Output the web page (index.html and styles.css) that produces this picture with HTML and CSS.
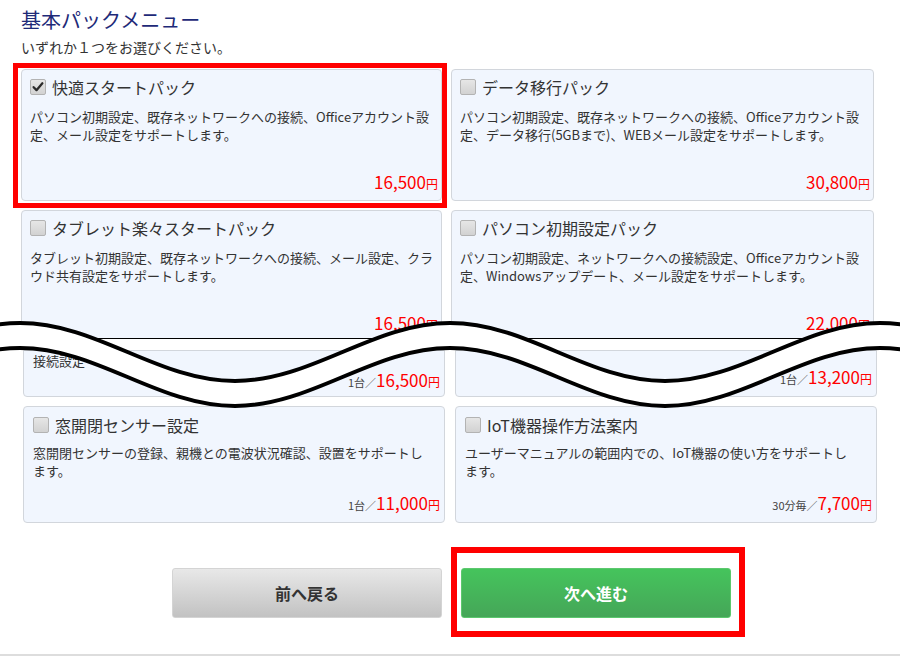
FILE: index.html
```html
<!DOCTYPE html>
<html lang="ja">
<head>
    <meta charset="UTF-8">
    <meta name="viewport" content="width=device-width, initial-scale=1.0">
    <title>基本パックメニュー</title>
    <link rel="stylesheet" href="styles.css">
</head>
<body>
    <div class="page">
        <!-- 上半分 -->
        <div class="shot shot-upper">
            <h2 class="menu-title">基本パックメニュー</h2>
            <p class="menu-lead">いずれか１つをお選びください。</p>

            <div class="pack-grid">
                <div class="pack is-checked is-marked">
                    <div class="pack-head">
                        <span class="check">
                            <svg viewBox="0 0 16 16" width="14" height="14"><path d="M3 8.2 L6.3 11.6 L13 3.8" fill="none" stroke="#2b2b2b" stroke-width="2.6" stroke-linecap="round" stroke-linejoin="round"/></svg>
                        </span>
                        快適スタートパック
                    </div>
                    <div class="pack-desc">パソコン初期設定、既存ネットワークへの接続、Officeアカウント設<br>定、メール設定をサポートします。</div>
                    <div class="pack-price"><em>16,500</em>円</div>
                </div>

                <div class="pack">
                    <div class="pack-head"><span class="check"></span>データ移行パック</div>
                    <div class="pack-desc">パソコン初期設定、既存ネットワークへの接続、Officeアカウント設<br>定、データ移行(5GBまで)、WEBメール設定をサポートします。</div>
                    <div class="pack-price"><em>30,800</em>円</div>
                </div>

                <div class="pack">
                    <div class="pack-head"><span class="check"></span>タブレット楽々スタートパック</div>
                    <div class="pack-desc">タブレット初期設定、既存ネットワークへの接続、メール設定、クラ<br>ウド共有設定をサポートします。</div>
                    <div class="pack-price"><em>16,500</em>円</div>
                </div>

                <div class="pack">
                    <div class="pack-head"><span class="check"></span>パソコン初期設定パック</div>
                    <div class="pack-desc">パソコン初期設定、ネットワークへの接続設定、Officeアカウント設<br>定、Windowsアップデート、メール設定をサポートします。</div>
                    <div class="pack-price"><em>22,000</em>円</div>
                </div>
            </div>
        </div>

        <!-- 下半分 -->
        <div class="shot shot-lower">
            <div class="pack-grid is-lower">
                <div class="pack is-tail">
                    <div class="pack-desc">接続設定</div>
                    <div class="pack-price"><small>1台／</small><em>16,500</em>円</div>
                </div>
                <div class="pack is-tail">
                    <div class="pack-desc"></div>
                    <div class="pack-price"><small>1台／</small><em>13,200</em>円</div>
                </div>

                <div class="pack is-short">
                    <div class="pack-head"><span class="check"></span>窓開閉センサー設定</div>
                    <div class="pack-desc">窓開閉センサーの登録、親機との電波状況確認、設置をサポートし<br>ます。</div>
                    <div class="pack-price"><small>1台／</small><em>11,000</em>円</div>
                </div>
                <div class="pack is-short">
                    <div class="pack-head"><span class="check"></span>IoT機器操作方法案内</div>
                    <div class="pack-desc">ユーザーマニュアルの範囲内での、IoT機器の使い方をサポートし<br>ます。</div>
                    <div class="pack-price"><small>30分毎／</small><em>7,700</em>円</div>
                </div>
            </div>

            <div class="step-nav">
                <a class="btn btn-back" href="#">前へ戻る</a>
                <a class="btn btn-next is-marked" href="#">次へ進む</a>
            </div>
        </div>

        <div class="page-foot"></div>

        <!-- 省略の波線 -->
        <svg class="cut-wave" viewBox="0 0 900 120" width="900" height="120">
            <path fill="#fff" d="M -195 81 C -117.6 81 -57.4 23 20 23 C 97.4 23 157.6 81 235 81 C 312.4 81 372.6 23 450 23 C 527.4 23 587.6 81 665 81 C 742.4 81 802.6 23 880 23 C 957.4 23 1017.6 81 1095 81 L 1095 106 C 1017.6 106 957.4 48 880 48 C 802.6 48 742.4 106 665 106 C 587.6 106 527.4 48 450 48 C 372.6 48 312.4 106 235 106 C 157.6 106 97.4 48 20 48 C -57.4 48 -117.6 106 -195 106 Z"/>
            <path fill="none" stroke="#000" stroke-width="4" d="M -195 81 C -117.6 81 -57.4 23 20 23 C 97.4 23 157.6 81 235 81 C 312.4 81 372.6 23 450 23 C 527.4 23 587.6 81 665 81 C 742.4 81 802.6 23 880 23 C 957.4 23 1017.6 81 1095 81"/>
            <path fill="none" stroke="#000" stroke-width="4" d="M -195 106 C -117.6 106 -57.4 48 20 48 C 97.4 48 157.6 106 235 106 C 312.4 106 372.6 48 450 48 C 527.4 48 587.6 106 665 106 C 742.4 106 802.6 48 880 48 C 957.4 48 1017.6 106 1095 106"/>
        </svg>
    </div>
</body>
</html>
```

FILE: styles.css
```css
body {
    margin: 0;
    background-color: #fff;
    font-family: "Noto Sans CJK JP", "Noto Sans", sans-serif;
    color: #333;
}

.page {
    position: relative;
    width: 900px;
    height: 657px;
    overflow: hidden;
}

/* 上のスクリーンショット部分 */
.shot-upper {
    box-sizing: border-box;
    height: 339px;
    padding-left: 21px;
    border-bottom: 1px solid #000;
    overflow: hidden;
}

.menu-title {
    margin: 0;
    padding-top: 8px;
    font-size: 20px;
    line-height: 24px;
    font-weight: normal;
    color: #1e2a78;
}

.menu-lead {
    margin: 6px 0 0;
    font-size: 14px;
    line-height: 18px;
}

.pack-grid {
    display: grid;
    grid-template-columns: 421px 423px;
    column-gap: 9px;
    row-gap: 9px;
    margin-top: 13px;
}

.pack {
    position: relative;
    box-sizing: border-box;
    height: 132px;
    display: flex;
    flex-direction: column;
    padding: 9px 3px 6px 8px;
    background-color: #f1f6fe;
    border: 1px solid #d2d6dc;
    border-radius: 4px;
}

.pack-head {
    display: flex;
    align-items: center;
    gap: 6px;
    height: 16px;
    font-size: 16px;
    line-height: 18px;
}

.check {
    box-sizing: border-box;
    width: 16px;
    height: 16px;
    display: flex;
    align-items: center;
    justify-content: center;
    background: linear-gradient(#e6e6e6, #d2d2d2);
    border: 1px solid #b3b3b3;
    border-radius: 2px;
}

.pack-desc {
    margin-top: 13px;
    font-size: 13px;
    line-height: 18px;
    white-space: nowrap;
}

.pack-price {
    margin-top: auto;
    text-align: right;
    font-size: 12px;
    line-height: 20px;
    color: #f00;
}

.pack-price em {
    font-style: normal;
    font-size: 17px;
}

.pack-price small {
    font-size: 11px;
    color: #444;
}

/* 赤枠の注記 */
.is-marked::after {
    content: "";
    position: absolute;
    left: -9px;
    top: -7px;
    right: -6px;
    bottom: -8px;
    border: 5px solid #f00;
    pointer-events: none;
}

/* 下のスクリーンショット部分 */
.shot-lower {
    padding-top: 11px;
}

.pack-grid.is-lower {
    grid-template-columns: 422px 422px;
    column-gap: 10px;
    margin-top: 0;
    padding-left: 23px;
}

.pack.is-tail {
    height: 47px;
    padding: 0 4px 7px 9px;
    border-top-left-radius: 0;
    border-top-right-radius: 0;
}

.pack.is-tail .pack-desc {
    margin-top: 1px;
}

.pack.is-short {
    height: 117px;
    padding: 10px 4px 7px 9px;
}

.pack.is-short .pack-desc {
    margin-top: 11px;
}

.step-nav {
    display: flex;
    gap: 19px;
    padding-left: 172px;
    margin-top: 45px;
}

.btn {
    position: relative;
    box-sizing: border-box;
    width: 270px;
    height: 50px;
    display: flex;
    align-items: center;
    justify-content: center;
    border-radius: 3px;
    font-size: 16px;
    font-weight: bold;
    text-decoration: none;
}

.btn-back {
    background: linear-gradient(#e8e8e8, #c2c2c2);
    border: 1px solid #d4d4d4;
    color: #333;
}

.btn-next {
    background: linear-gradient(#45c45c, #45a658);
    border: 1px solid #5cc86e;
    color: #fff;
}

.btn-next.is-marked::after {
    left: -11px;
    top: -22px;
    right: -15px;
    bottom: -20px;
    border-width: 6px;
}

.page-foot {
    position: absolute;
    left: 0;
    right: 0;
    top: 654px;
    border-top: 2px solid #ddd;
}

.cut-wave {
    position: absolute;
    left: 0;
    top: 300px;
}
```
